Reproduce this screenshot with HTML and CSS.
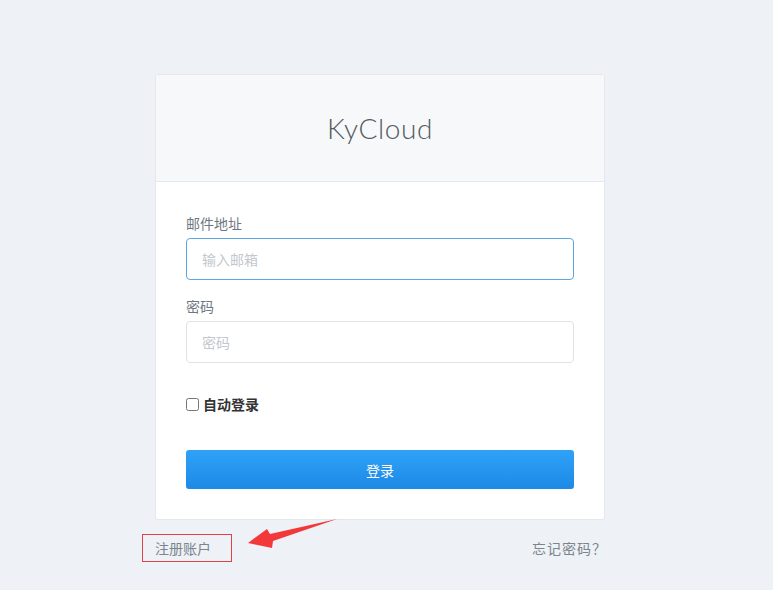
FILE: index.html
```html
<!DOCTYPE html>
<html lang="zh-CN">
<head>
  <meta charset="utf-8">
  <link rel="stylesheet" href="styles.css">
</head>
<body>
  <div class="page">
    <div class="card">
      <div class="card-header">
        <h1 class="brand">KyCloud</h1>
      </div>
      <form class="card-body">
        <div class="field">
          <label class="label" for="email">邮件地址</label>
          <input id="email" class="input focused" type="email" placeholder="输入邮箱" autofocus>
        </div>
        <div class="field">
          <label class="label" for="password">密码</label>
          <input id="password" class="input" type="password" placeholder="密码">
        </div>
        <label class="remember">
          <input type="checkbox" class="check">
          <span>自动登录</span>
        </label>
        <button type="button" class="button primary">登录</button>
      </form>
    </div>

    <div class="links">
      <a class="link register" href="#">注册账户</a>
      <a class="link forgot" href="#">忘记密码？</a>
    </div>
  </div>

  <svg class="arrow" width="773" height="590" viewBox="0 0 773 590">
    <polygon points="248,543 267,529 270,534 337,519 273,541 272,548" fill="#f2383a"/>
  </svg>
</body>
</html>
```

FILE: styles.css
```css
* {
  box-sizing: border-box;
}

body {
  margin: 0;
  background: #eef1f5;
  font-family: "Noto Sans CJK SC", "Noto Sans", sans-serif;
  font-size: 14px;
  line-height: 20px;
  color: #333;
}

.page {
  width: 450px;
  margin: 74px 0 0 155px;
}

.card {
  background: #ffffff;
  border: 1px solid #e4e8ec;
  border-radius: 3px;
}

.card-header {
  height: 107px;
  display: flex;
  align-items: center;
  justify-content: center;
  background: #f7f8fa;
  border-bottom: 1px solid #e4e8ec;
}

.brand {
  margin: 0;
  font-family: Lato, "Open Sans", sans-serif;
  font-weight: 300;
  font-size: 28px;
  color: #555a60;
  letter-spacing: 0.6px;
}

.card-body {
  padding: 31px 30px 30px;
}

.field {
  margin-bottom: 16px;
}

.label {
  display: block;
  margin-bottom: 5px;
  color: #6f7882;
}

.input {
  display: block;
  width: 100%;
  height: 42px;
  padding: 0 15px;
  border: 1px solid #dfe3e7;
  border-radius: 4px;
  font-family: inherit;
  font-size: 14px;
  color: #333;
  background: #ffffff;
  outline: none;
}

.input::placeholder {
  color: #c4c8cd;
}

.input.focused,
.input:focus {
  border-color: #5aa7e2;
}

.remember {
  display: flex;
  align-items: center;
  margin-top: 31px;
  height: 20px;
  font-weight: 700;
  color: #333;
}

.check {
  width: 13px;
  height: 13px;
  margin: 0 4px 0 0;
}

.button {
  display: block;
  width: 100%;
  height: 39px;
  margin-top: 36px;
  border: none;
  border-radius: 3px;
  font-family: inherit;
  font-size: 14px;
  cursor: pointer;
}

.button.primary {
  background: linear-gradient(180deg, #2fa2f8 0%, #1d89e6 100%);
  color: #ffffff;
}

.links {
  display: flex;
  justify-content: space-between;
  align-items: center;
  margin-top: 14px;
}

.link {
  color: #7b8590;
  text-decoration: none;
}

.register {
  margin-left: -13px;
  padding: 3px 20px 3px 12px;
  border: 1px solid #e0424a;
}

.forgot {
  margin-right: -2px;
  letter-spacing: 1px;
}

.arrow {
  position: absolute;
  left: 0;
  top: 0;
  pointer-events: none;
}
```
